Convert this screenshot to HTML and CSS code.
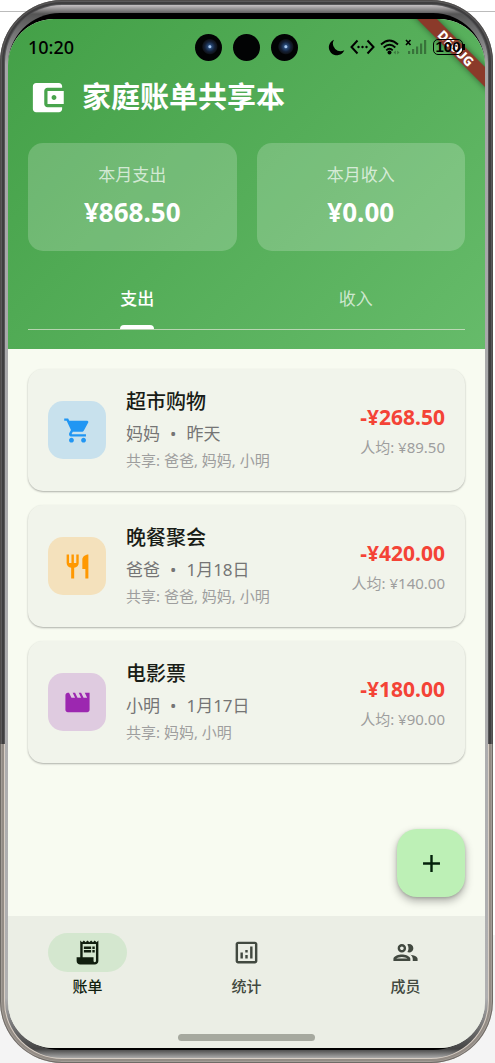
FILE: index.html
```html
<!DOCTYPE html>
<html lang="zh-CN">
<head>
<meta charset="utf-8">
<meta name="viewport" content="width=device-width, initial-scale=1">
<title>家庭账单共享本</title>
<link rel="stylesheet" href="styles.css">
</head>
<body>
<div class="phone"><div class="rim"><div class="bezel"><div class="screen">
  <header class="header">
    <div class="debug-clip"><span class="debug-ribbon">DEBUG</span></div>
    <div class="status-bar">
      <time class="clock">10:20</time>
      <div class="cameras">
        <span class="camera lens"></span><span class="camera"></span><span class="camera lens"></span>
      </div>
      <div class="status-icons">
        <svg width="17" height="17" viewBox="0 0 17 17"><path d="M6 .8A8 8 0 1 0 16.3 11.2A7.6 7.6 0 0 1 6 .8z"/></svg>
        <svg width="25" height="16" viewBox="0 0 25 16"><path d="M7.5 1.5L1.5 8l6 6.500M17.500 1.500l6 6.500l-6 6.500" fill="none" stroke="#000" stroke-width="2"/><circle cx="8.500" cy="8" r="1.200"/><circle cx="12.500" cy="8" r="1.200"/><circle cx="16.500" cy="8" r="1.200"/></svg>
        <svg width="20" height="16" viewBox="0 0 20 16"><path d="M1 5.500Q9.500-2.500 18 5.500M3.700 8.500Q9.500 3 15.300 8.500M6.300 11.300Q9.500 8.300 12.700 11.300" fill="none" stroke="#000" stroke-width="1.800"/><circle cx="9.500" cy="13.500" r="2"/><path d="M13.500 13.500l2.300-2v4zM19.500 13.500l-2.300-2v4z" opacity=".3"/></svg>
        <svg width="23" height="16" viewBox="0 0 23 16"><path d="M1 1l4.500 5M5.500 1L1 6" stroke="#000" stroke-width="1.600"/><path d="M3 12h2.200v3H3zM7 10h2.200v5H7zM11 7.500h2.200V15H11zM15 4.500h2.200V15H15zM19 1h2.200v14H19z" opacity=".35"/></svg>
        <span class="battery">100</span>
      </div>
    </div>
    <div class="title-row">
      <svg class="wallet" viewBox="0 0 24 24"><path d="M21 18v1c0 1.100-.9 2-2 2H5c-1.110 0-2-.9-2-2V5c0-1.100.89-2 2-2h14c1.100 0 2 .9 2 2v1h-9c-1.110 0-2 .9-2 2v8c0 1.100.89 2 2 2h9zm-9-2h10V8H12v8zm4-2.500c-.83 0-1.500-.67-1.500-1.500s.67-1.500 1.500-1.500 1.500.67 1.500 1.500-.67 1.500-1.500 1.500z"/></svg>
      <h1 class="title">家庭账单共享本</h1>
    </div>
    <div class="summary">
      <section class="summary-card"><span class="summary-label">本月支出</span><strong class="summary-value">¥868.50</strong></section>
      <section class="summary-card"><span class="summary-label">本月收入</span><strong class="summary-value">¥0.00</strong></section>
    </div>
    <div class="tabs" role="tablist">
      <button class="tab active" role="tab" aria-selected="true">支出</button>
      <button class="tab" role="tab" aria-selected="false">收入</button>
    </div>
  </header>

  <main class="content">
    <article class="bill">
      <span class="category shopping"><svg viewBox="0 0 24 24"><path d="M7 18c-1.100 0-1.990.9-1.990 2S5.900 22 7 22s2-.9 2-2-.9-2-2-2zM1 2v2h2l3.600 7.590-1.350 2.450c-.16.28-.25.61-.25.96 0 1.100.9 2 2 2h12v-2H7.420c-.14 0-.25-.11-.25-.25l.03-.12.9-1.630h7.450c.75 0 1.410-.41 1.750-1.030l3.580-6.490A1.003 1.003 0 0 0 20 4H5.210l-.94-2H1zm16 16c-1.100 0-1.990.9-1.990 2s.89 2 1.990 2 2-.9 2-2-.9-2-2-2z"/></svg></span>
      <div class="details"><h2 class="name">超市购物</h2><p class="meta"><span>妈妈</span><span>•</span><span>昨天</span></p><p class="shared">共享: 爸爸, 妈妈, 小明</p></div>
      <div class="figures"><strong class="amount">-¥268.50</strong><span class="average">人均: ¥89.50</span></div>
    </article>
    <article class="bill">
      <span class="category dining"><svg viewBox="0 0 24 24"><path d="M11 9H9V2H7v7H5V2H3v7c0 2.120 1.660 3.840 3.750 3.970V22h2.500v-9.030C11.340 12.840 13 11.120 13 9V2h-2v7zm5-3v8h2.500v8H21V2c-2.760 0-5 2.240-5 4z"/></svg></span>
      <div class="details"><h2 class="name">晚餐聚会</h2><p class="meta"><span>爸爸</span><span>•</span><span>1月18日</span></p><p class="shared">共享: 爸爸, 妈妈, 小明</p></div>
      <div class="figures"><strong class="amount">-¥420.00</strong><span class="average">人均: ¥140.00</span></div>
    </article>
    <article class="bill">
      <span class="category movie"><svg viewBox="0 0 24 24"><path d="M18 4l2 4h-3l-2-4h-2l2 4h-3l-2-4H8l2 4H7L5 4H4c-1.100 0-1.990.9-1.990 2L2 18c0 1.100.9 2 2 2h16c1.100 0 2-.9 2-2V4h-4z"/></svg></span>
      <div class="details"><h2 class="name">电影票</h2><p class="meta"><span>小明</span><span>•</span><span>1月17日</span></p><p class="shared">共享: 妈妈, 小明</p></div>
      <div class="figures"><strong class="amount">-¥180.00</strong><span class="average">人均: ¥90.00</span></div>
    </article>
    <button class="fab" aria-label="添加账单"><svg viewBox="0 0 24 24"><path d="M19 13h-6v6h-2v-6H5v-2h6V5h2v6h6z"/></svg></button>
  </main>

  <footer class="footer">
    <nav class="nav">
      <button class="nav-item current"><span class="indicator"><svg viewBox="0 0 24 24"><path d="M19.500 3.500L18 2l-1.500 1.500L15 2l-1.500 1.500L12 2l-1.500 1.500L9 2 7.500 3.500 6 2v14H3v3c0 1.660 1.340 3 3 3h12c1.660 0 3-1.340 3-3V2l-1.500 1.500zM19 19c0 .55-.45 1-1 1s-1-.45-1-1v-3H8V5h11v14z"/><path d="M9 7h6v2H9zM16 7h2v2h-2zM9 10h6v2H9zM16 10h2v2h-2z"/></svg></span><span>账单</span></button>
      <button class="nav-item"><span class="indicator"><svg viewBox="0 0 24 24"><path d="M19 3H5c-1.100 0-2 .9-2 2v14c0 1.100.9 2 2 2h14c1.100 0 2-.9 2-2V5c0-1.100-.9-2-2-2zm0 16H5V5h14v14z"/><path d="M7 12h2v5H7zM15 7h2v10h-2zM11 14h2v3h-2zM11 10h2v2h-2z"/></svg></span><span>统计</span></button>
      <button class="nav-item"><span class="indicator"><svg viewBox="0 0 24 24"><path d="M9 13.750c-2.340 0-7 1.170-7 3.500V19h14v-1.750c0-2.330-4.660-3.500-7-3.500zM4.340 17c.84-.58 2.870-1.250 4.660-1.250s3.820.67 4.660 1.250H4.340zM9 12c1.930 0 3.500-1.570 3.500-3.500S10.930 5 9 5 5.500 6.570 5.500 8.500 7.070 12 9 12zm0-5c.83 0 1.500.67 1.500 1.500S9.830 10 9 10s-1.500-.67-1.500-1.500S8.170 7 9 7zm7.040 6.810c1.160.84 1.960 1.960 1.960 3.440V19h4v-1.750c0-2.020-3.500-3.170-5.960-3.440zM15 12c1.930 0 3.500-1.570 3.500-3.500S16.930 5 15 5c-.54 0-1.040.13-1.500.35.63.89 1 1.980 1 3.150s-.37 2.260-1 3.150c.46.22.96.35 1.500.35z"/></svg></span><span>成员</span></button>
    </nav>
    <span class="home-bar"></span>
  </footer>
</div></div></div></div>
</body>
</html>
```
FILE: styles.css
```css
* { box-sizing: border-box; }

body {
  margin: 0;
  padding-right: 2px;
  background: linear-gradient(#fff 11px, #bbb 11px, #bbb 12px, #fff 12px, #fff 88%, #f4f4f4 88%);
  font-family: "Noto Sans", "Noto Sans CJK SC", sans-serif;
}

h1, h2, p { margin: 0; }

button {
  border: 0;
  padding: 0;
  background: none;
  color: inherit;
  font: inherit;
}

svg { display: block; }

/* Device frame */
.phone {
  display: flex;
  min-height: 100vh;
  padding: 5px;
  border-radius: 62px;
  background: linear-gradient(#565658 70%, #d8cec4 70%);
  box-shadow: inset 0 0 0 1px rgba(70, 66, 62, .55), inset 0 0 0 2px rgba(255, 255, 255, .15), inset 0 0 0 4px rgba(20, 18, 16, .35);
}

.rim {
  display: flex;
  flex: 1;
  padding: 8px 3px;
  border-radius: 57px;
  background: linear-gradient(#c5c1c3, #555 9px, #a6a6a8 60px, #b0b0b1 calc(100% - 60px), #444 calc(100% - 9px), #aaa);
}

.bezel {
  display: flex;
  flex: 1;
  padding: 6px 0 2px;
  border-radius: 52px;
  background: #000;
}

.screen {
  display: flex;
  flex: 1;
  flex-direction: column;
  overflow: hidden;
  border-radius: 46px;
  background: #f8fbf1;
}

/* Header */
.header {
  position: relative;
  padding: 0 20px 19px;
  background: linear-gradient(135deg, #43a047, #66bb6a);
  color: #fff;
}

.debug-clip {
  position: absolute;
  top: 0;
  right: 0;
  width: 110px;
  height: 110px;
  overflow: hidden;
}

.debug-ribbon {
  position: absolute;
  top: 22px;
  right: -41px;
  width: 140px;
  background: #8b3a2a;
  box-shadow: 0 0 6px rgba(0, 0, 0, .45);
  font: 800 13px/14px "Noto Sans", sans-serif;
  text-align: center;
  transform: rotate(45deg);
}

.status-bar {
  position: relative;
  display: grid;
  grid-template-columns: 1fr auto 1fr;
  align-items: center;
  height: 56px;
  color: #000;
}

.clock { font: 500 18px/24px "Noto Sans", sans-serif; }

.cameras { display: flex; gap: 11px; }

.camera {
  width: 27px;
  height: 27px;
  border-radius: 50%;
  background: #020304;
}

.lens { background: radial-gradient(circle at 55% 47%, #a8c8f0 0 1px, #284a78 2px, #142036 5px, #10141c 7px, #020304 8px); }

.status-icons {
  display: flex;
  align-items: center;
  justify-content: flex-end;
  gap: 5px;
}

.battery {
  position: relative;
  width: 30px;
  margin-right: 2px;
  border: 1px solid #000;
  border-radius: 5px;
  font: 700 15px/14px "Liberation Sans", sans-serif;
  text-align: center;
}

.battery::after {
  position: absolute;
  top: 4px;
  right: -3px;
  width: 2px;
  height: 6px;
  background: #000;
  content: "";
}

.title-row {
  display: flex;
  align-items: center;
  gap: 15px;
  height: 44px;
}

.wallet { width: 39px; height: 39px; fill: #fff; }
.title { font-size: 29px; font-weight: 700; line-height: 40px; }

.summary {
  display: grid;
  grid-template-columns: 1fr 1fr;
  gap: 20px;
  margin: 24px 0 20px;
}

.summary-card {
  display: flex;
  flex-direction: column;
  align-items: center;
  gap: 6px;
  padding: 20px 20px 19px;
  border-radius: 15px;
  background: rgba(255, 255, 255, .2);
}

.summary-label { color: rgba(255, 255, 255, .7); font-size: 17px; line-height: 24px; }
.summary-value { font-size: 26px; line-height: 39px; }

.tabs {
  display: grid;
  grid-template-columns: 1fr 1fr;
  border-bottom: 1px solid rgba(225, 230, 215, .7);
}

.tab {
  display: grid;
  justify-items: center;
  padding-top: 16px;
  color: rgba(255, 255, 255, .7);
  font-size: 17px;
  line-height: 24px;
}

.tab::after {
  width: 34px;
  height: 4px;
  margin-top: 14px;
  border-radius: 4px 4px 0 0;
  content: "";
}

.tab.active { color: #fff; font-weight: 500; }
.tab.active::after { background: #fff; }

/* Bill list */
.content {
  position: relative;
  display: flex;
  flex: 1;
  flex-direction: column;
  gap: 14px;
  padding: 20px;
}

.bill {
  display: flex;
  align-items: center;
  gap: 20px;
  padding: 20px;
  border-radius: 15px;
  background: #f1f4eb;
  box-shadow: 0 1px 2px rgba(0, 0, 0, .3);
}

.category {
  display: grid;
  place-items: center;
  width: 58px;
  height: 58px;
  border-radius: 15px;
}

.category svg { width: 29px; height: 29px; fill: currentColor; }
.shopping { background: #c8e1ed; color: #2196f3; }
.dining { background: #f4e1bc; color: #ff9800; }
.movie { background: #dfcbe0; color: #9c27b0; }

.details { flex: 1; }
.name { color: #191d17; font-size: 20px; font-weight: 500; line-height: 26px; }
.meta { display: flex; gap: 10px; margin: 6px 0 4px; color: #757575; font-size: 17px; line-height: 25px; }
.shared { color: #9e9e9e; font-size: 15px; line-height: 21px; }

.figures { display: flex; flex-direction: column; align-items: flex-end; gap: 5px; }
.amount { color: #f44336; font-size: 21px; line-height: 29px; }
.average { color: #9e9e9e; font-size: 15px; line-height: 21px; }

.fab {
  position: absolute;
  right: 20px;
  bottom: 19px;
  display: grid;
  place-items: center;
  width: 68px;
  height: 68px;
  border-radius: 20px;
  background: #bdf0b6;
  box-shadow: 0 4px 8px rgba(0, 0, 0, .3), 0 1px 3px rgba(0, 0, 0, .15);
}

.fab svg { width: 29px; height: 29px; fill: #04210b; }

/* Bottom navigation */
.footer {
  display: flex;
  flex-direction: column;
  align-items: center;
  gap: 37px;
  padding: 17px 0 7px;
  background: #ebeee5;
}

.nav { display: grid; grid-template-columns: repeat(3, 1fr); width: 100%; }

.nav-item {
  display: flex;
  flex-direction: column;
  align-items: center;
  gap: 4px;
  color: #424940;
  font-size: 15px;
  font-weight: 500;
  line-height: 21px;
}

.indicator {
  display: grid;
  place-items: center;
  width: 79px;
  height: 39px;
  border-radius: 20px;
}

.indicator svg { width: 29px; height: 29px; fill: currentColor; }
.current { color: #111f0f; }
.current .indicator { background: #d4e7cf; }

.home-bar {
  width: 137px;
  height: 7px;
  border-radius: 4px;
  background: #a6a99f;
}
```
